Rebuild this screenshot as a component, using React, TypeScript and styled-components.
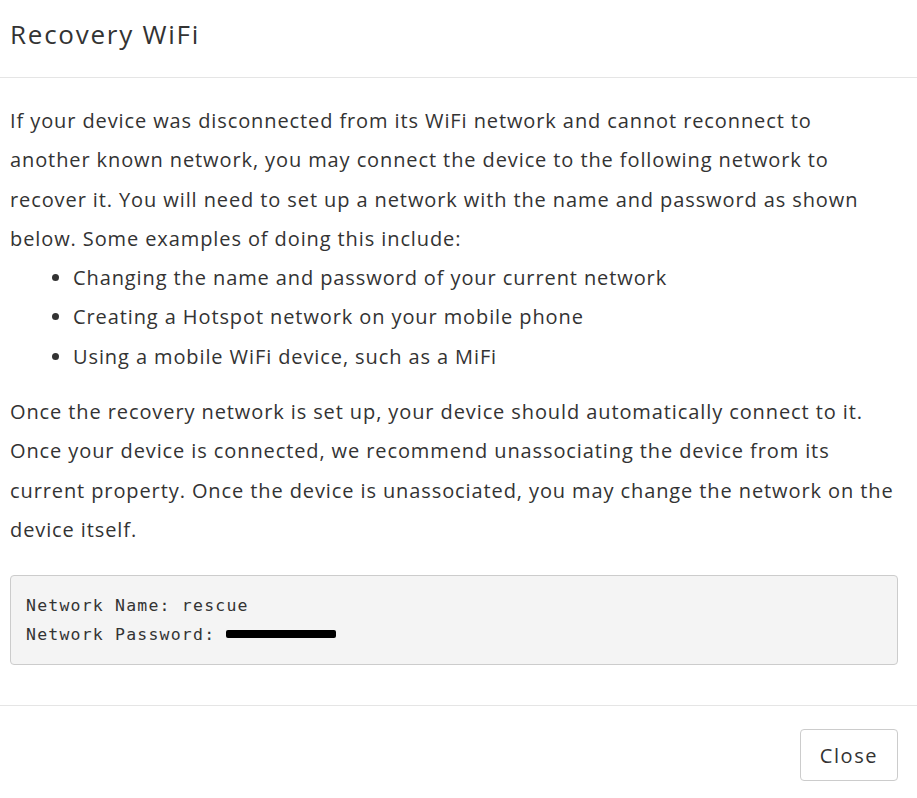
import styled, { createGlobalStyle } from "styled-components";

const GlobalStyle = createGlobalStyle`
  html,
  body {
    margin: 0;
    padding: 0;
    background: #ffffff;
  }

  body {
    font-family: "Open Sans", Lato, sans-serif;
    color: #333333;
  }
`;

const Dialog = styled.div`
  width: 917px;
  min-height: 798px;
  display: flex;
  flex-direction: column;
  box-sizing: border-box;
`;

const Header = styled.header`
  height: 78px;
  display: flex;
  align-items: center;
  padding: 0 10px 10px;
  box-sizing: border-box;
  border-bottom: 1px solid #e5e5e5;
`;

const Title = styled.h4`
  margin: 0;
  font-size: 26px;
  font-weight: 400;
  letter-spacing: 1.75px;
  color: #333333;
`;

const Body = styled.div`
  padding: 23px 19px 40px 10px;
  font-size: 20px;
  line-height: 39.3px;
  letter-spacing: 0.9px;
`;

const Paragraph = styled.p`
  margin: 0;
`;

const List = styled.ul`
  margin: 0 0 16px;
  padding-left: 63px;
`;

const Code = styled.pre`
  margin: 26px 0 0;
  padding: 15px 15px;
  background: #f4f4f4;
  border: 1px solid #cccccc;
  border-radius: 4px;
  font-family: "DejaVu Sans Mono", "Liberation Mono", monospace;
  font-size: 16.5px;
  line-height: 29px;
  letter-spacing: 1.2px;
  color: #333333;
`;

const Redacted = styled.span`
  display: inline-block;
  width: 110px;
  height: 8px;
  background: #000000;
  vertical-align: middle;
  margin-top: -4px;
  border-radius: 2px;
`;

const Footer = styled.footer`
  border-top: 1px solid #e5e5e5;
  display: flex;
  justify-content: flex-end;
  padding: 23px 19px 18px 10px;
`;

const Button = styled.button`
  width: 98px;
  height: 52px;
  background: #ffffff;
  border: 1px solid #cccccc;
  border-radius: 4px;
  font-family: "Open Sans", Lato, sans-serif;
  font-size: 20px;
  letter-spacing: 1.6px;
  color: #333333;
  cursor: pointer;
`;

export default function App() {
  return (
    <>
      <GlobalStyle />
      <Dialog>
        <Header>
          <Title>Recovery WiFi</Title>
        </Header>
        <Body>
          <Paragraph>
            If your device was disconnected from its WiFi network and cannot
            reconnect to another known network, you may connect the device to
            the following network to recover it. You will need to set up a
            network with the name and password as shown below. Some examples
            of doing this include:
          </Paragraph>
          <List>
            <li>Changing the name and password of your current network</li>
            <li>Creating a Hotspot network on your mobile phone</li>
            <li>Using a mobile WiFi device, such as a MiFi</li>
          </List>
          <Paragraph>
            Once the recovery network is set up, your device should
            automatically connect to it. Once your device is connected, we
            recommend unassociating the device from its current property. Once
            the device is unassociated, you may change the network on the
            device itself.
          </Paragraph>
          <Code>
            Network Name: rescue
            {"\n"}
            Network Password: <Redacted />
          </Code>
        </Body>
        <Footer>
          <Button>Close</Button>
        </Footer>
      </Dialog>
    </>
  );
}
